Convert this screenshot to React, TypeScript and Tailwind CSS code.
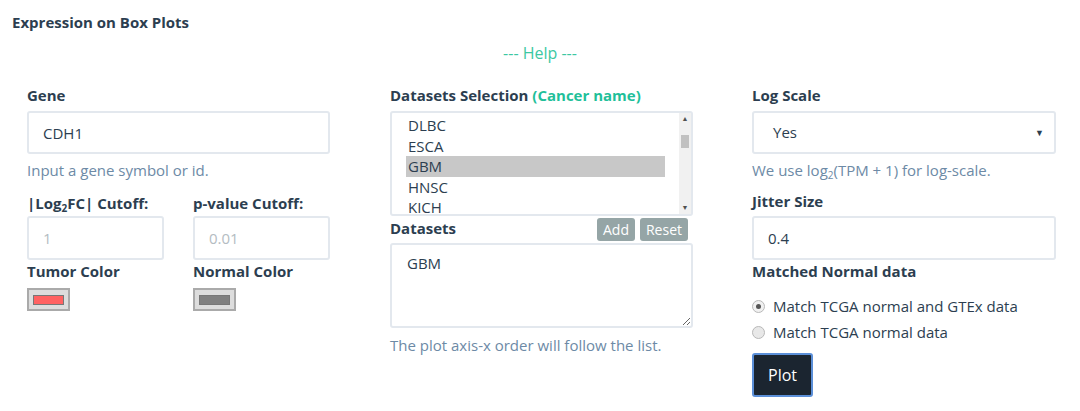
import React from "react";

const font = { fontFamily: '"Open Sans", "Noto Sans", sans-serif' };

const datasets = ["DLBC", "ESCA", "GBM", "HNSC", "KICH"];

function Label({ children }: { children: React.ReactNode }) {
  return <div className="text-[15px] font-bold leading-[20px] text-[#2c3e50]">{children}</div>;
}

function Swatch({ color }: { color: string }) {
  return (
    <div className="flex h-[23px] w-[43px] items-center justify-center border-2 border-[#aaaaaa] bg-[#dddddd]">
      <div className="h-[10px] w-[31px] border border-[#777777]" style={{ background: color }} />
    </div>
  );
}

export default function App() {
  return (
    <div className="h-[411px] w-[1080px] bg-white text-[#2c3e50]" style={font}>
      <div className="px-[12px] pt-[12px] text-[15px] font-bold leading-[20px]">Expression on Box Plots</div>
      <div className="mt-[11px] text-center text-[16px] leading-[20px] text-[#3cc8a2]">--- Help ---</div>

      <div className="mt-[22px] grid grid-cols-[363px_362px_304px] pl-[27px]">
        {/* column 1 */}
        <div className="w-[303px]">
          <Label>Gene</Label>
          <input
            readOnly
            value="CDH1"
            className="mt-[6px] h-[43px] w-full rounded-[3px] border-2 border-[#e3e8ee] px-[14px] text-[15px] text-[#2c3e50] outline-none"
          />
          <div className="mt-[6px] text-[15px] leading-[20px] text-[#6d8aa6]">Input a gene symbol or id.</div>
          <div className="mt-[13px] grid grid-cols-[166px_137px]">
            <Label>
              |Log<sub className="text-[10px]">2</sub>FC| Cutoff:
            </Label>
            <Label>p-value Cutoff:</Label>
          </div>
          <div className="mt-[3px] grid grid-cols-[166px_137px]">
            <input
              readOnly
              placeholder="1"
              className="h-[44px] w-[137px] rounded-[3px] border-2 border-[#e3e8ee] px-[14px] text-[15px] outline-none placeholder:text-[#b4bcc2]"
            />
            <input
              readOnly
              placeholder="0.01"
              className="h-[44px] w-[137px] rounded-[3px] border-2 border-[#e3e8ee] px-[14px] text-[15px] outline-none placeholder:text-[#b4bcc2]"
            />
          </div>
          <div className="mt-[1px] grid grid-cols-[166px_137px]">
            <Label>Tumor Color</Label>
            <Label>Normal Color</Label>
          </div>
          <div className="mt-[7px] grid grid-cols-[166px_137px]">
            <Swatch color="#ff6262" />
            <Swatch color="#808080" />
          </div>
        </div>

        {/* column 2 */}
        <div className="w-[303px]">
          <Label>
            Datasets Selection <span className="text-[#1fbf9a]">(Cancer name)</span>
          </Label>
          <div className="mt-[6px] flex h-[105px] rounded-[3px] border-2 border-[#e3e8ee]">
            <div className="flex-1 pl-[14px] pr-[14px] pt-[2px]">
              {datasets.map((d) => (
                <div
                  key={d}
                  className={`h-[20.6px] pl-[2px] text-[15px] leading-[20.6px] ${d === "GBM" ? "bg-[#c8c8c8]" : ""}`}
                >
                  {d}
                </div>
              ))}
            </div>
            <div className="flex w-[12px] flex-col items-center bg-[#f1f1f1] py-[2px] text-[7px] leading-[8px] text-[#505050]">
              <span>▲</span>
              <div className="mt-[12px] h-[13px] w-[8px] bg-[#c1c1c1]" />
              <div className="flex-1" />
              <span>▼</span>
            </div>
          </div>
          <div className="mt-[2px] flex h-[23px] items-start justify-between">
            <Label>Datasets</Label>
            <div className="flex gap-[5px] pr-[5px]">
              <button className="h-[23px] rounded-[3px] bg-[#95a5a6] px-[6px] text-[14px] leading-[23px] text-white">Add</button>
              <button className="h-[23px] rounded-[3px] bg-[#95a5a6] px-[6px] text-[14px] leading-[23px] text-white">Reset</button>
            </div>
          </div>
          <textarea
            readOnly
            value="GBM"
            className="mt-[2px] block h-[85px] w-full resize-y rounded-[3px] border-2 border-[#e3e8ee] px-[15px] py-[7px] text-[15px] text-[#2c3e50] outline-none"
          />
          <div className="mt-[7px] text-[15px] leading-[20px] text-[#6d8aa6]">The plot axis-x order will follow the list.</div>
        </div>

        {/* column 3 */}
        <div className="w-[304px]">
          <Label>Log Scale</Label>
          <div className="mt-[6px] flex h-[43px] w-full items-center justify-between rounded-[3px] border-2 border-[#e3e8ee] pl-[19px] pr-[10px] text-[15px]">
            <span>Yes</span>
            <span className="text-[9px]">▼</span>
          </div>
          <div className="mt-[6px] text-[15px] leading-[20px] text-[#6d8aa6]">
            We use log<sub className="text-[10px]">2</sub>(TPM + 1) for log-scale.
          </div>
          <div className="mt-[11px]">
            <Label>Jitter Size</Label>
          </div>
          <input
            readOnly
            value="0.4"
            className="mt-[5px] h-[44px] w-full rounded-[3px] border-2 border-[#e3e8ee] px-[14px] text-[15px] text-[#2c3e50] outline-none"
          />
          <div className="mt-[1px]">
            <Label>Matched Normal data</Label>
          </div>
          <div className="mt-[15px] flex flex-col gap-[6px] text-[15px] leading-[20px]">
            <label className="flex items-center gap-[8px]">
              <span className="flex h-[13px] w-[13px] items-center justify-center rounded-full border border-[#b8b8b8] bg-[#f0f0f0]">
                <span className="h-[5px] w-[5px] rounded-full bg-[#555555]" />
              </span>
              Match TCGA normal and GTEx data
            </label>
            <label className="flex items-center gap-[8px]">
              <span className="h-[13px] w-[13px] rounded-full border border-[#b8b8b8] bg-[#e8e8e8]" />
              Match TCGA normal data
            </label>
          </div>
          <button className="mt-[11px] h-[44px] w-[61px] rounded-[3px] border-2 border-[#5b8fd8] bg-[#1b2530] text-[16px] text-white">
            Plot
          </button>
        </div>
      </div>
    </div>
  );
}
